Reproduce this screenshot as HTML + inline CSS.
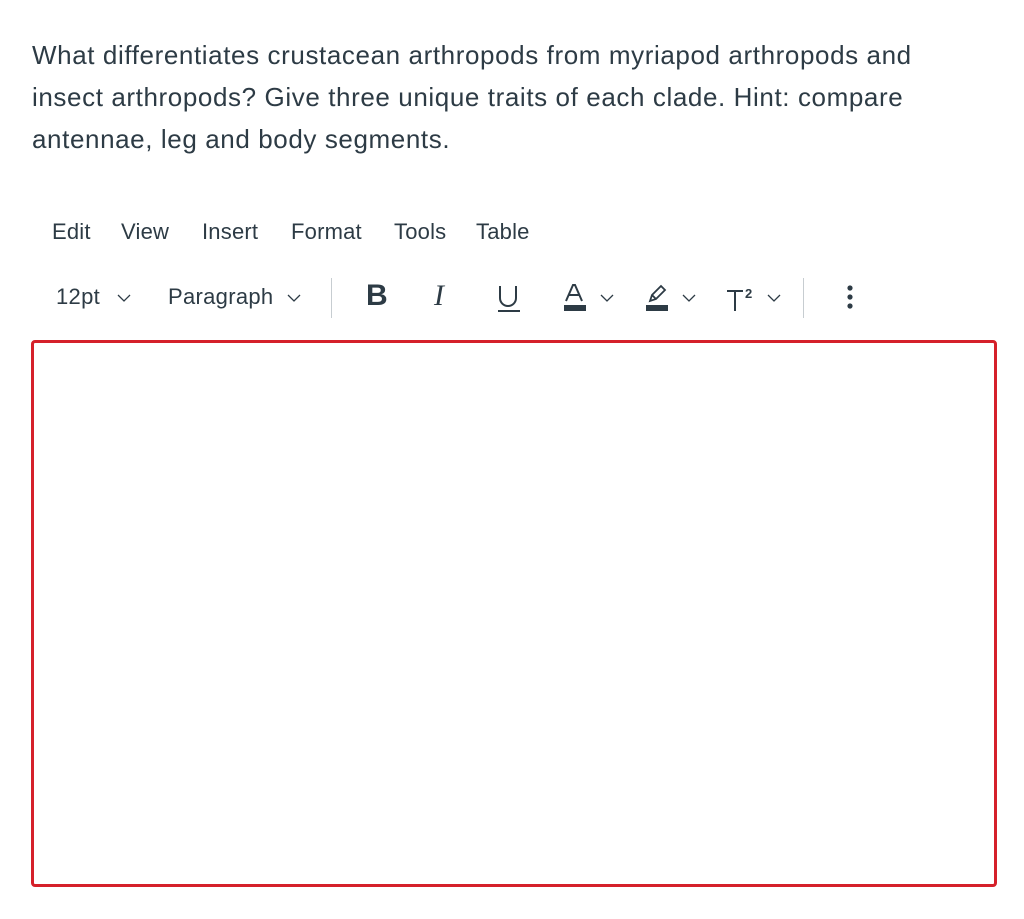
<!DOCTYPE html>
<html><head><meta charset="utf-8"><style>
body{margin:0;background:#fff;width:1024px;height:919px;overflow:hidden;font-family:"Liberation Sans",sans-serif;color:#2d3b45;position:relative}
.q{position:absolute;left:32px;top:34px;font-size:26px;line-height:42px;color:#2d3b45;white-space:nowrap;letter-spacing:0.6px}
.menu{position:absolute;top:219px;font-size:22px;color:#2d3b45;letter-spacing:0.2px}
.tb{position:absolute;top:284px;font-size:22px;color:#2d3b45;white-space:nowrap;letter-spacing:0.3px}
.chev{position:absolute;top:293px}
.sep{position:absolute;top:278px;width:1px;height:40px;background:#c7cdd1}
.box{position:absolute;left:31px;top:340px;width:960px;height:541px;border:3px solid #d5202a;border-radius:4px}
</style></head><body>
<div class="q">What differentiates crustacean arthropods from myriapod arthropods and<br>insect arthropods? Give three unique traits of each clade. Hint: compare<br>antennae, leg and body segments.</div>
<div class="menu" style="left:52px">Edit</div>
<div class="menu" style="left:121px">View</div>
<div class="menu" style="left:202px">Insert</div>
<div class="menu" style="left:291px">Format</div>
<div class="menu" style="left:394px">Tools</div>
<div class="menu" style="left:476px">Table</div>
<div class="tb" style="left:56px">12pt</div>
<svg class="chev" style="left:117px" width="14" height="10"><path d="M1 2l6 6 6-6" fill="none" stroke="#2d3b45" stroke-width="1.3"/></svg>
<div class="tb" style="left:168px">Paragraph</div>
<svg class="chev" style="left:287px" width="14" height="10"><path d="M1 2l6 6 6-6" fill="none" stroke="#2d3b45" stroke-width="1.3"/></svg>
<div class="sep" style="left:331px"></div>
<div class="tb" style="left:366px;font-size:30px;top:279px;font-weight:bold">B</div>
<div class="tb" style="left:434px;font-size:30px;top:279px;font-family:'Liberation Serif',serif;font-style:italic">I</div>
<svg style="position:absolute;left:496px;top:284px" width="26" height="30"><path d="M4 2v12a8 8 0 0 0 16 0V2" fill="none" stroke="#2d3b45" stroke-width="2"/><path d="M2 27h22" stroke="#2d3b45" stroke-width="2"/></svg>
<svg style="position:absolute;left:563px;top:284px" width="28" height="30"><path d="M3 17L10 1h2l7 16M6 11h11" fill="none" stroke="#2d3b45" stroke-width="2"/><rect x="1" y="21" width="22" height="6" fill="#2d3b45"/></svg>
<svg class="chev" style="left:600px" width="14" height="10"><path d="M1 2l6 6 6-6" fill="none" stroke="#2d3b45" stroke-width="1.3"/></svg>
<svg style="position:absolute;left:645px;top:284px" width="28" height="30"><path d="M5 17l2-6 9-9 4 4-9 9zM7 11l4 4" fill="none" stroke="#2d3b45" stroke-width="1.8"/><rect x="1" y="21" width="22" height="6" fill="#2d3b45"/></svg>
<svg class="chev" style="left:682px" width="14" height="10"><path d="M1 2l6 6 6-6" fill="none" stroke="#2d3b45" stroke-width="1.3"/></svg>
<svg style="position:absolute;left:726px;top:284px" width="34" height="30"><path d="M1 7h16M9 7v20" stroke="#2d3b45" stroke-width="2"/><text x="19" y="14" font-size="13" font-weight="bold" fill="#2d3b45" font-family="Liberation Sans">2</text></svg>
<svg class="chev" style="left:767px" width="14" height="10"><path d="M1 2l6 6 6-6" fill="none" stroke="#2d3b45" stroke-width="1.3"/></svg>
<div class="sep" style="left:803px"></div>
<svg style="position:absolute;left:846px;top:284px" width="8" height="28"><circle cx="4" cy="4" r="2.6" fill="#2d3b45"/><circle cx="4" cy="13" r="2.6" fill="#2d3b45"/><circle cx="4" cy="22" r="2.6" fill="#2d3b45"/></svg>
<div class="box"></div>
</body></html>
